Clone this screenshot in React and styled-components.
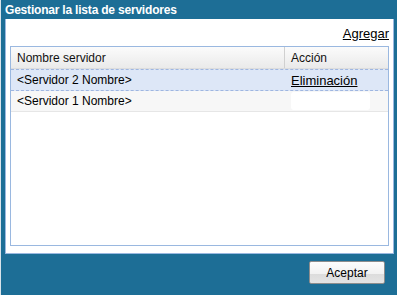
import React from 'react';
import styled, { createGlobalStyle } from 'styled-components';

const GlobalStyle = createGlobalStyle`
  html, body {
    margin: 0;
    padding: 0;
    background: #1d6e96;
  }
  body {
    font-family: "Liberation Sans", Arial, sans-serif;
    font-size: 12px;
    color: #000;
  }
`;

const Window = styled.div`
  width: 397px;
  height: 295px;
  box-sizing: border-box;
  background: #1d6e96;
  border-left: 1px solid #d9e3ea;
  display: flex;
  flex-direction: column;
`;

const TitleBar = styled.div`
  height: 19px;
  padding-left: 4px;
  display: flex;
  align-items: center;
  color: #fff;
  font-family: "Liberation Sans", Arial, sans-serif;
  font-weight: bold;
  font-size: 12px;
  letter-spacing: -0.2px;
`;

const Panel = styled.div`
  margin-left: 4px;
  width: 389px;
  height: 235px;
  box-sizing: border-box;
  background: #fff;
  border-left: 1px solid #9ab8e0;
  border-bottom: 1px solid #9ab8e0;
  border-right: 1px solid #9ab8e0;
  padding: 0 4px 7px 4px;
  display: flex;
  flex-direction: column;
`;

const LinkRow = styled.div`
  height: 26px;
  display: flex;
  justify-content: flex-end;
  align-items: center;
  padding-top: 1px;
`;

const TextLink = styled.a`
  color: #000;
  text-decoration: underline;
  cursor: pointer;
  font-size: 13px;
`;

const Grid = styled.div`
  flex: 1;
  border: 1px solid #9ab8e0;
  display: flex;
  flex-direction: column;
`;

const HeaderRow = styled.div`
  display: grid;
  grid-template-columns: 274px 1fr;
  height: 21px;
  background: linear-gradient(#fbfbfb, #eaeaea);
  border-bottom: 1px solid #dcdcdc;
`;

const HeaderCell = styled.div`
  display: flex;
  align-items: center;
  padding-left: 6px;
  border-right: ${p => (p.last ? 'none' : '1px solid #d0d0d0')};
  color: #111;
`;

const Row = styled.div`
  display: grid;
  grid-template-columns: 274px 1fr;
  height: 20px;
  background: ${p => (p.selected ? '#dde7f7' : '#f7f7f7')};
  border-top: ${p => (p.selected ? '1px dashed #9fb6e0' : 'none')};
  border-bottom: ${p => (p.selected ? '1px dashed #9fb6e0' : '1px solid #e6e6e6')};
`;

const Cell = styled.div`
  display: flex;
  align-items: center;
  padding-left: 6px;
`;

const Blank = styled.div`
  width: 79px;
  height: 18px;
  background: #fff;
  border-radius: 3px;
`;

const Footer = styled.div`
  flex: 1;
  display: flex;
  justify-content: flex-end;
  align-items: flex-start;
  padding: 7px 12px 0 0;
`;

const Button = styled.button`
  width: 76px;
  height: 23px;
  border: 1px solid #8d8d8d;
  border-radius: 2px;
  background: linear-gradient(#fdfdfd 0%, #f2f2f2 55%, #dcdcdc 56%, #e4e4e4 100%);
  font-family: "Liberation Sans", Arial, sans-serif;
  font-size: 12px;
  color: #000;
  padding: 0;
`;

const rows = [
  { name: '<Servidor 2 Nombre>', selected: true },
  { name: '<Servidor 1 Nombre>', selected: false },
];

export default function App() {
  return (
    <>
      <GlobalStyle />
      <Window>
        <TitleBar>Gestionar la lista de servidores</TitleBar>
        <Panel>
          <LinkRow>
            <TextLink>Agregar</TextLink>
          </LinkRow>
          <Grid>
            <HeaderRow>
              <HeaderCell>Nombre servidor</HeaderCell>
              <HeaderCell last>Acción</HeaderCell>
            </HeaderRow>
            {rows.map(r => (
              <Row key={r.name} selected={r.selected}>
                <Cell>{r.name}</Cell>
                <Cell>{r.selected ? <TextLink>Eliminación</TextLink> : <Blank />}</Cell>
              </Row>
            ))}
          </Grid>
        </Panel>
        <Footer>
          <Button>Aceptar</Button>
        </Footer>
      </Window>
    </>
  );
}
